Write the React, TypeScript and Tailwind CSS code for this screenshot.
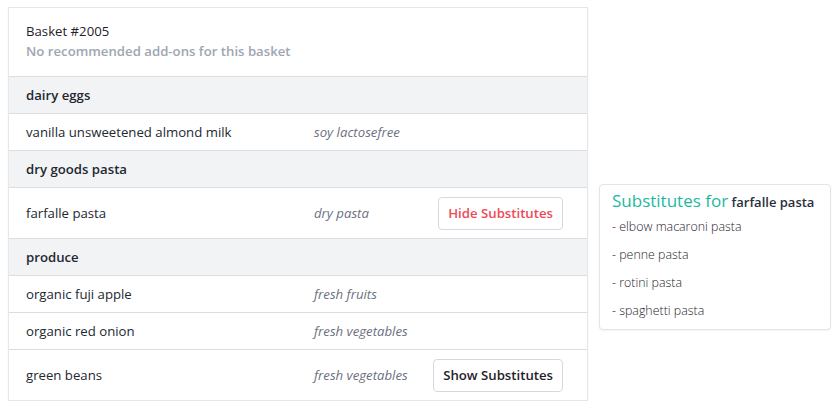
import React from 'react';

type Item = { name: string; tag: string; action?: 'hide' | 'show' };
type Group = { title: string; items: Item[] };

const groups: Group[] = [
  { title: 'dairy eggs', items: [{ name: 'vanilla unsweetened almond milk', tag: 'soy lactosefree' }] },
  { title: 'dry goods pasta', items: [{ name: 'farfalle pasta', tag: 'dry pasta', action: 'hide' }] },
  {
    title: 'produce',
    items: [
      { name: 'organic fuji apple', tag: 'fresh fruits' },
      { name: 'organic red onion', tag: 'fresh vegetables' },
      { name: 'green beans', tag: 'fresh vegetables', action: 'show' },
    ],
  },
];

const substitutes = ['elbow macaroni pasta', 'penne pasta', 'rotini pasta', 'spaghetti pasta'];

function ItemRow({ item }: { item: Item }) {
  return (
    <div
      className={
        'flex items-center border-t border-[#dcdde3] pl-[17px] pr-[24px] ' +
        (item.action ? 'h-[51px]' : 'h-[37px]')
      }
    >
      <span className="w-[288px] shrink-0 text-[#232830]">{item.name}</span>
      <span className="flex-1 italic text-[#6b7080]">{item.tag}</span>
      {item.action === 'hide' && (
        <button
          type="button"
          className="h-[33px] rounded-[4px] border border-[#d6d8df] bg-white px-[9px] font-semibold text-[#ee4a58]"
        >
          Hide Substitutes
        </button>
      )}
      {item.action === 'show' && (
        <button
          type="button"
          className="h-[33px] rounded-[4px] border border-[#d6d8df] bg-white px-[9px] font-semibold text-[#1f2329]"
        >
          Show Substitutes
        </button>
      )}
    </div>
  );
}

export default function App() {
  return (
    <div
      className="flex items-start gap-[11px] pl-[8px] pt-[7px] text-[13.2px] leading-[20px]"
      style={{ fontFamily: '"Open Sans", "Noto Sans", sans-serif' }}
    >
      <div className="w-[580px] border border-[#e6e7ea] bg-white shadow-[0_1px_2px_rgba(0,0,0,0.05)]">
        <div className="px-[17px] pb-[15px] pt-[13px]">
          <p className="font-medium text-[#1f2329]">Basket #2005</p>
          <p className="font-semibold text-[#a0a5b3]">No recommended add-ons for this basket</p>
        </div>
        {groups.map((g) => (
          <div key={g.title}>
            <div className="flex h-[37px] items-center border-t border-[#dcdde3] bg-[#f2f3f5] px-[17px] font-semibold text-[#232830]">
              {g.title}
            </div>
            {g.items.map((it) => (
              <ItemRow key={it.name} item={it} />
            ))}
          </div>
        ))}
      </div>

      <div className="mt-[177px] w-[232px] rounded-[4px] border border-[#e3e4e8] bg-white pb-[4px] pl-[12px] pr-[4px] pt-[4px] shadow-[0_1px_2px_rgba(0,0,0,0.05)]">
        <p className="whitespace-nowrap leading-[24px]">
          <span className="text-[17px] font-medium text-[#1cb9a0]">Substitutes for</span>{' '}
          <span className="text-[13px] font-semibold text-[#2a2e3a]">farfalle pasta</span>
        </p>
        <ul className="mt-[-1px] text-[12.4px] font-light text-[#1f232b]">
          {substitutes.map((s) => (
            <li key={s} className="leading-[28px]">
              - {s}
            </li>
          ))}
        </ul>
      </div>
    </div>
  );
}
